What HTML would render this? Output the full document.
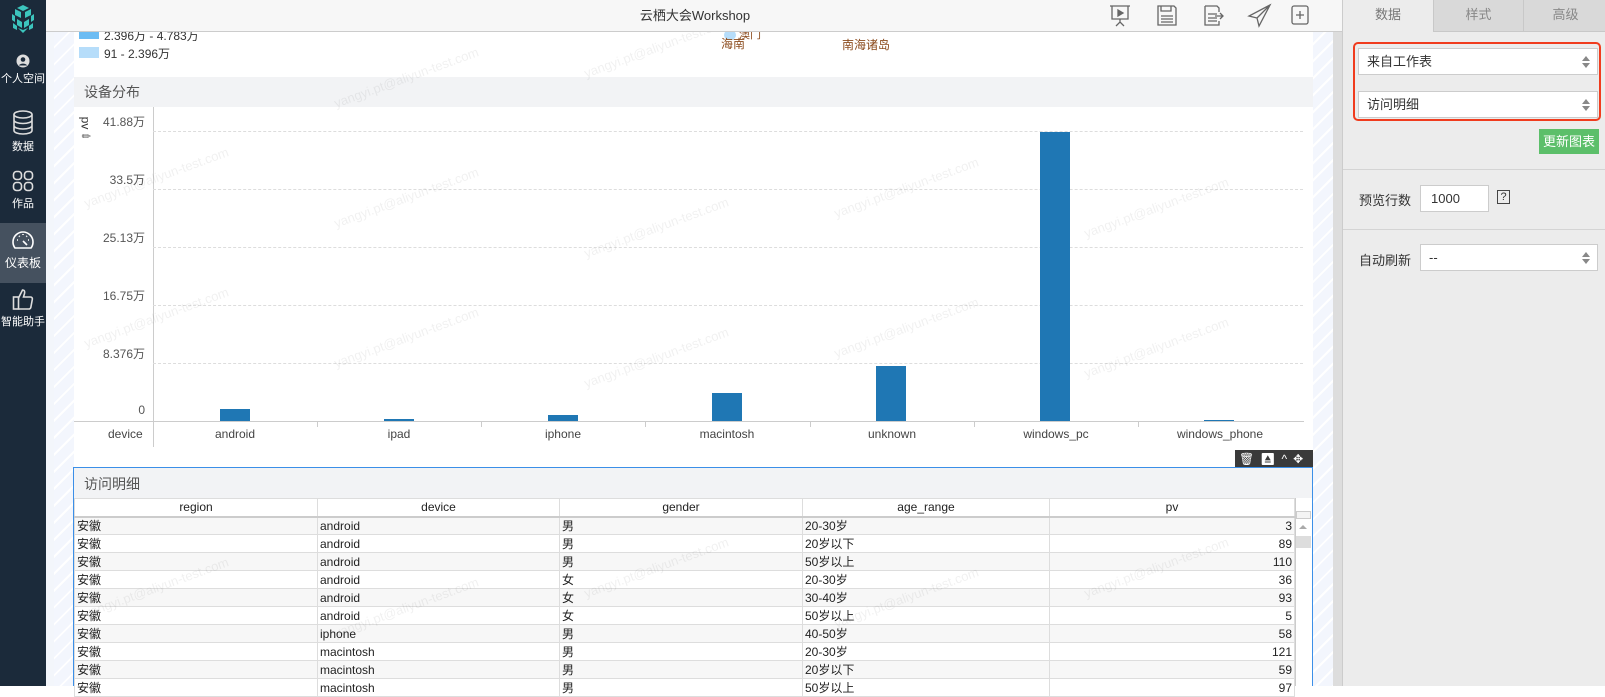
<!DOCTYPE html>
<html><head><meta charset="utf-8"><style>
*{margin:0;padding:0;box-sizing:border-box}
body{width:1605px;height:686px;overflow:hidden;position:relative;background:#fff;font-family:"Liberation Sans","Noto Sans CJK SC",sans-serif;font-size:12px;color:#333}
.abs{position:absolute}
.side{left:0;top:0;width:46px;height:686px;background:#1b2a3a}
.si{position:absolute;left:0;width:46px;text-align:center;color:#fff;font-size:11px}
.si svg{display:block;margin:0 auto}
.top{left:46px;top:0;width:1296px;height:32px;background:#f7f7f7;border-bottom:1px solid #ccc}
.canvasbg{left:46px;top:32px;width:1296px;height:654px;background:#f3f6fb}
.stripe{left:54px;top:32px;width:1279px;height:654px;background:repeating-linear-gradient(135deg,#f3f6fd 0 10px,#fff 10px 12px)}
.scroll{left:1333px;top:32px;width:9px;height:654px;background:#ddd}
.panel{left:1342px;top:0;width:263px;height:686px;background:#ececec;border-left:1px solid #ccc}
.tab{position:absolute;top:0;height:32px;line-height:30px;text-align:center;font-size:13px;color:#888;background:#d9d9d9;border-left:1px solid #c8c8c8;border-bottom:1px solid #c8c8c8}
.sel{position:absolute;background:#fff;border:1px solid #ccc;height:27px;line-height:25px;padding-left:8px;font-size:13px;color:#333}
.sel:after{content:"";position:absolute;right:7px;top:7px;border:4px solid transparent;border-bottom:5px solid #888;border-top:none}
.sel:before{content:"";position:absolute;right:7px;top:14px;border:4px solid transparent;border-top:5px solid #888;border-bottom:none}
.grid{position:absolute;left:153px;width:1150px;border-top:1px dashed #ddd}
.yl{position:absolute;right:1460px;font-size:12px;color:#555;text-align:right;width:80px}
.bar{position:absolute;width:30px;background:#1f77b4}
.xl{position:absolute;top:427px;width:164px;text-align:center;font-size:12px;color:#444}
table{border-collapse:collapse;font-size:12px;table-layout:fixed}
td{border:1px solid #ddd;height:18px;padding:0 2px;line-height:16px;color:#222;white-space:nowrap;overflow:hidden}
tr:nth-child(even) td{background:#f7f7f7}
.wm{position:absolute;color:rgba(0,0,0,0.06);font-size:13px;transform:rotate(-20deg);white-space:nowrap}
</style></head><body>
<div class="abs side">
 <svg class="abs" style="left:7px;top:3px" width="32" height="32" viewBox="0 0 32 32"><g fill="#3cc5bd"><path d="M16 2l6 3-6 3-6-3z"/><path d="M8 6l6 3v6l-6-3z"/><path d="M24 6l-6 3v6l6-3z"/><path d="M5 11l3 2v6l-3-2z"/><path d="M27 11l-3 2v6l3-2z"/><path d="M10 16l5 3v6l-5-3z"/><path d="M22 16l-5 3v6l5-3z"/><path d="M6 20l4 3v4l-4-2z"/><path d="M26 20l-4 3v4l4-2z"/><path d="M16 27l5-2-5 5-5-5z"/></g></svg>
 <div class="si" style="top:54px"><svg width="14" height="14" viewBox="0 0 14 14"><circle cx="7" cy="7" r="6.5" fill="#ddd"/><circle cx="7" cy="5.5" r="2.3" fill="#1b2a3a"/><path d="M3 11.5c1-2.5 7-2.5 8 0" fill="#1b2a3a"/></svg><div style="margin-top:2px">个人空间</div></div>
 <div class="si" style="top:110px"><svg width="22" height="26" viewBox="0 0 22 26" fill="none" stroke="#ddd" stroke-width="1.6"><ellipse cx="11" cy="4.5" rx="9" ry="3.5"/><path d="M2 4.5v16c0 2 4 3.5 9 3.5s9-1.5 9-3.5v-16M2 10c0 2 4 3.5 9 3.5s9-1.5 9-3.5M2 15.5c0 2 4 3.5 9 3.5s9-1.5 9-3.5"/></svg><div style="margin-top:2px">数据</div></div>
 <div class="si" style="top:170px"><svg width="22" height="22" viewBox="0 0 22 22" fill="none" stroke="#ddd" stroke-width="1.6"><rect x="1.5" y="1.5" width="8" height="8" rx="3"/><rect x="12.5" y="1.5" width="8" height="8" rx="3"/><rect x="1.5" y="12.5" width="8" height="8" rx="3"/><rect x="12.5" y="12.5" width="8" height="8" rx="3"/></svg><div style="margin-top:3px">作品</div></div>
 <div class="abs" style="left:0;top:223px;width:46px;height:60px;background:#45515f"></div>
 <div class="si" style="top:229px"><svg width="24" height="22" viewBox="0 0 24 22" fill="none" stroke="#fff" stroke-width="1.6"><path d="M4 19a10 10 0 1 1 16 0z"/><path d="M12 12l4 4M6 11h1M17 11h1M12 5v1M8 7l.7.7M16 7l-.7.7"/></svg><div style="margin-top:3px;font-size:12px">仪表板</div></div>
 <div class="si" style="top:288px"><svg width="22" height="22" viewBox="0 0 22 22" fill="none" stroke="#ddd" stroke-width="1.6"><rect x="1.5" y="9" width="5" height="12"/><path d="M6.5 10l4-8c2 0 2.5 1.5 2 3.5l-1 3.5h7c1.5 0 2 1 1.8 2.5l-1.5 8c-.3 1-1 1.5-2 1.5h-10.3"/></svg><div style="margin-top:3px">智能助手</div></div>
</div>
<div class="abs canvasbg"></div>
<div class="abs stripe"></div>
<div class="abs scroll"></div>
<div class="abs" style="left:74px;top:32px;width:1239px;height:45px;background:#fff"></div>
<div class="abs" style="left:79px;top:32px;width:20px;height:7px;background:#6cbcf3"></div>
<div class="abs" style="left:104px;top:27px;font-size:12px;color:#333">2.396万 - 4.783万</div>
<div class="abs" style="left:79px;top:47px;width:20px;height:11px;background:#b6ddfa"></div>
<div class="abs" style="left:104px;top:45px;font-size:12px;color:#333">91 - 2.396万</div>
<div class="abs" style="left:724px;top:30px;width:12px;height:10px;border-radius:6px;background:#b6ddfa"></div>
<div class="abs" style="left:721px;top:35px;font-size:12px;color:#8b4a1c">海南</div>
<div class="abs" style="left:739px;top:26px;font-size:11px;color:#8b4a1c">澳门</div>
<div class="abs" style="left:842px;top:36px;font-size:12px;color:#8b4a1c">南海诸岛</div>
<div class="abs" style="left:74px;top:77px;width:1239px;height:30px;background:#f2f3f5"></div>
<div class="abs" style="left:84px;top:82px;font-size:14px;color:#555">设备分布</div>
<div class="abs" style="left:74px;top:107px;width:1239px;height:360px;background:#fff"></div>
<div class="abs" style="left:153px;top:107px;width:1px;height:340px;background:#ccc"></div>
<div class="abs" style="left:79px;top:116px;font-size:12px;transform:rotate(90deg);color:#333">pv</div>
<div class="abs" style="left:82px;top:130px;font-size:11px;color:#555;transform:rotate(-45deg)">✎</div>
<div class="grid" style="top:131px"></div><div class="grid" style="top:189px"></div><div class="grid" style="top:247px"></div><div class="grid" style="top:305px"></div><div class="grid" style="top:363px"></div>
<div class="abs" style="left:74px;top:421px;width:1230px;height:1px;background:#ccc"></div>
<div class="yl" style="top:113px">41.88万</div><div class="yl" style="top:171px">33.5万</div><div class="yl" style="top:229px">25.13万</div><div class="yl" style="top:287px">16.75万</div><div class="yl" style="top:345px">8.376万</div><div class="yl" style="top:403px">0</div>
<div class="bar" style="left:220px;top:409px;height:12px"></div>
<div class="bar" style="left:384px;top:419px;height:2px"></div>
<div class="bar" style="left:548px;top:415px;height:6px"></div>
<div class="bar" style="left:712px;top:393px;height:28px"></div>
<div class="bar" style="left:876px;top:366px;height:55px"></div>
<div class="bar" style="left:1040px;top:132px;height:289px"></div>
<div class="bar" style="left:1204px;top:420px;height:1px"></div>
<div class="abs" style="left:317px;top:421px;width:1px;height:6px;background:#ccc"></div><div class="abs" style="left:481px;top:421px;width:1px;height:6px;background:#ccc"></div><div class="abs" style="left:645px;top:421px;width:1px;height:6px;background:#ccc"></div><div class="abs" style="left:810px;top:421px;width:1px;height:6px;background:#ccc"></div><div class="abs" style="left:974px;top:421px;width:1px;height:6px;background:#ccc"></div><div class="abs" style="left:1138px;top:421px;width:1px;height:6px;background:#ccc"></div>
<div class="abs" style="left:108px;top:427px;color:#444">device</div>
<div class="xl" style="left:153px">android</div><div class="xl" style="left:317px">ipad</div><div class="xl" style="left:481px">iphone</div><div class="xl" style="left:645px">macintosh</div><div class="xl" style="left:810px">unknown</div><div class="xl" style="left:974px">windows_pc</div><div class="xl" style="left:1138px">windows_phone</div>
<div class="abs" style="left:1235px;top:450px;width:78px;height:18px;background:#3a3a3a;color:#fff;font-size:12px;line-height:18px;letter-spacing:6px;padding-left:4px">🗑⏏^✥</div>
<div class="abs" style="left:73px;top:467px;width:1240px;height:219px;background:#fff;border:1px solid #3b8fe8;border-bottom:none"></div>
<div class="abs" style="left:74px;top:468px;width:1238px;height:30px;background:#f2f3f5"></div>
<div class="abs" style="left:84px;top:474px;font-size:14px;color:#555">访问明细</div>
<table class="abs" style="left:74px;top:498px;width:1220px">
<colgroup><col style="width:243px"><col style="width:242px"><col style="width:243px"><col style="width:247px"><col style="width:245px"></colgroup>
<tr><td style="text-align:center;border-bottom:2px solid #ccc">region</td><td style="text-align:center;border-bottom:2px solid #ccc">device</td><td style="text-align:center;border-bottom:2px solid #ccc">gender</td><td style="text-align:center;border-bottom:2px solid #ccc">age_range</td><td style="text-align:center;border-bottom:2px solid #ccc">pv</td></tr>
<tr><td>安徽</td><td>android</td><td>男</td><td>20-30岁</td><td style="text-align:right">3</td></tr>
<tr><td>安徽</td><td>android</td><td>男</td><td>20岁以下</td><td style="text-align:right">89</td></tr>
<tr><td>安徽</td><td>android</td><td>男</td><td>50岁以上</td><td style="text-align:right">110</td></tr>
<tr><td>安徽</td><td>android</td><td>女</td><td>20-30岁</td><td style="text-align:right">36</td></tr>
<tr><td>安徽</td><td>android</td><td>女</td><td>30-40岁</td><td style="text-align:right">93</td></tr>
<tr><td>安徽</td><td>android</td><td>女</td><td>50岁以上</td><td style="text-align:right">5</td></tr>
<tr><td>安徽</td><td>iphone</td><td>男</td><td>40-50岁</td><td style="text-align:right">58</td></tr>
<tr><td>安徽</td><td>macintosh</td><td>男</td><td>20-30岁</td><td style="text-align:right">121</td></tr>
<tr><td>安徽</td><td>macintosh</td><td>男</td><td>20岁以下</td><td style="text-align:right">59</td></tr>
<tr><td>安徽</td><td>macintosh</td><td>男</td><td>50岁以上</td><td style="text-align:right">97</td></tr>
</table>
<div class="abs" style="left:1295px;top:498px;width:16px;height:188px;background:#fff;border-left:1px solid #ccc"></div>
<div class="abs" style="left:1296px;top:511px;width:15px;height:8px;border:1px solid #ccc;background:#f4f4f4"></div>
<div class="abs" style="left:1299px;top:525px;border:4px solid transparent;border-bottom:4px solid #aaa;border-top:none"></div>
<div class="abs" style="left:1296px;top:536px;width:15px;height:12px;background:#ddd"></div>
<div class="wm" style="left:330px;top:70px">yangyi.pt@aliyun-test.com</div>
<div class="wm" style="left:580px;top:40px">yangyi.pt@aliyun-test.com</div>
<div class="wm" style="left:80px;top:170px">yangyi.pt@aliyun-test.com</div>
<div class="wm" style="left:330px;top:190px">yangyi.pt@aliyun-test.com</div>
<div class="wm" style="left:580px;top:220px">yangyi.pt@aliyun-test.com</div>
<div class="wm" style="left:830px;top:180px">yangyi.pt@aliyun-test.com</div>
<div class="wm" style="left:1080px;top:200px">yangyi.pt@aliyun-test.com</div>
<div class="wm" style="left:80px;top:310px">yangyi.pt@aliyun-test.com</div>
<div class="wm" style="left:330px;top:330px">yangyi.pt@aliyun-test.com</div>
<div class="wm" style="left:580px;top:350px">yangyi.pt@aliyun-test.com</div>
<div class="wm" style="left:830px;top:320px">yangyi.pt@aliyun-test.com</div>
<div class="wm" style="left:1080px;top:340px">yangyi.pt@aliyun-test.com</div>
<div class="wm" style="left:80px;top:580px">yangyi.pt@aliyun-test.com</div>
<div class="wm" style="left:330px;top:600px">yangyi.pt@aliyun-test.com</div>
<div class="wm" style="left:580px;top:560px">yangyi.pt@aliyun-test.com</div>
<div class="wm" style="left:830px;top:590px">yangyi.pt@aliyun-test.com</div>
<div class="wm" style="left:1080px;top:560px">yangyi.pt@aliyun-test.com</div>
<div class="abs top"></div>
<div class="abs" style="left:580px;top:5px;width:230px;text-align:center;font-size:13px;color:#333">云栖大会Workshop</div>
<svg class="abs" style="left:1109px;top:3px" width="220" height="26" viewBox="0 0 220 26" fill="none" stroke="#666" stroke-width="1.3">
 <path d="M1 3h20M3 3v13h16V3M11 16v3M7 23l4-4 4 4"/><path d="M9 7l5 3-5 3z" fill="#666"/>
 <path d="M49 3h16l2 2v17H49zM52 3v5h10V3M52 13h12M52 16h12M52 19h12"/>
 <path d="M96 3h12l2 2v4M96 3v19h14v-4M99 11h9M99 15h9M99 18h9M106 13h8M111 10l3 3-3 3"/>
 <path d="M161 2L140 13l8 2 2 8 11-21zM148 15l13-13"/>
 <rect x="183" y="3" width="16" height="18" rx="2"/><path d="M191 8v8M187 12h8"/>
</svg>
<div class="abs panel">
 <div class="tab" style="left:0;width:90px;background:#ececec;border-left:none;border-bottom:none;color:#777">数据</div>
 <div class="tab" style="left:90px;width:90px">样式</div>
 <div class="tab" style="left:180px;width:84px">高级</div>
 <div class="abs" style="left:10px;top:42px;width:248px;height:79px;border:2px solid #f03c1e;border-radius:5px"></div>
 <div class="sel" style="left:15px;top:48px;width:240px">来自工作表</div>
 <div class="sel" style="left:15px;top:91px;width:240px">访问明细</div>
 <div class="abs" style="left:196px;top:129px;width:60px;height:25px;background:#5cbf6a;color:#fff;font-size:13px;line-height:25px;text-align:center">更新图表</div>
 <div class="abs" style="left:0;top:169px;width:263px;height:1px;background:#d4d4d4"></div>
 <div class="abs" style="left:16px;top:190px;font-size:13px;color:#333">预览行数</div>
 <div class="abs" style="left:77px;top:185px;width:69px;height:27px;background:#fff;border:1px solid #ccc;padding-left:10px;line-height:25px;font-size:13px">1000</div>
 <div class="abs" style="left:154px;top:190px;width:13px;height:14px;border:1px solid #444;font-size:11px;line-height:12px;text-align:center">?</div>
 <div class="abs" style="left:0;top:229px;width:263px;height:1px;background:#d4d4d4"></div>
 <div class="abs" style="left:16px;top:250px;font-size:13px;color:#333">自动刷新</div>
 <div class="sel" style="left:77px;top:244px;width:178px">--</div>
</div>
</body></html>
